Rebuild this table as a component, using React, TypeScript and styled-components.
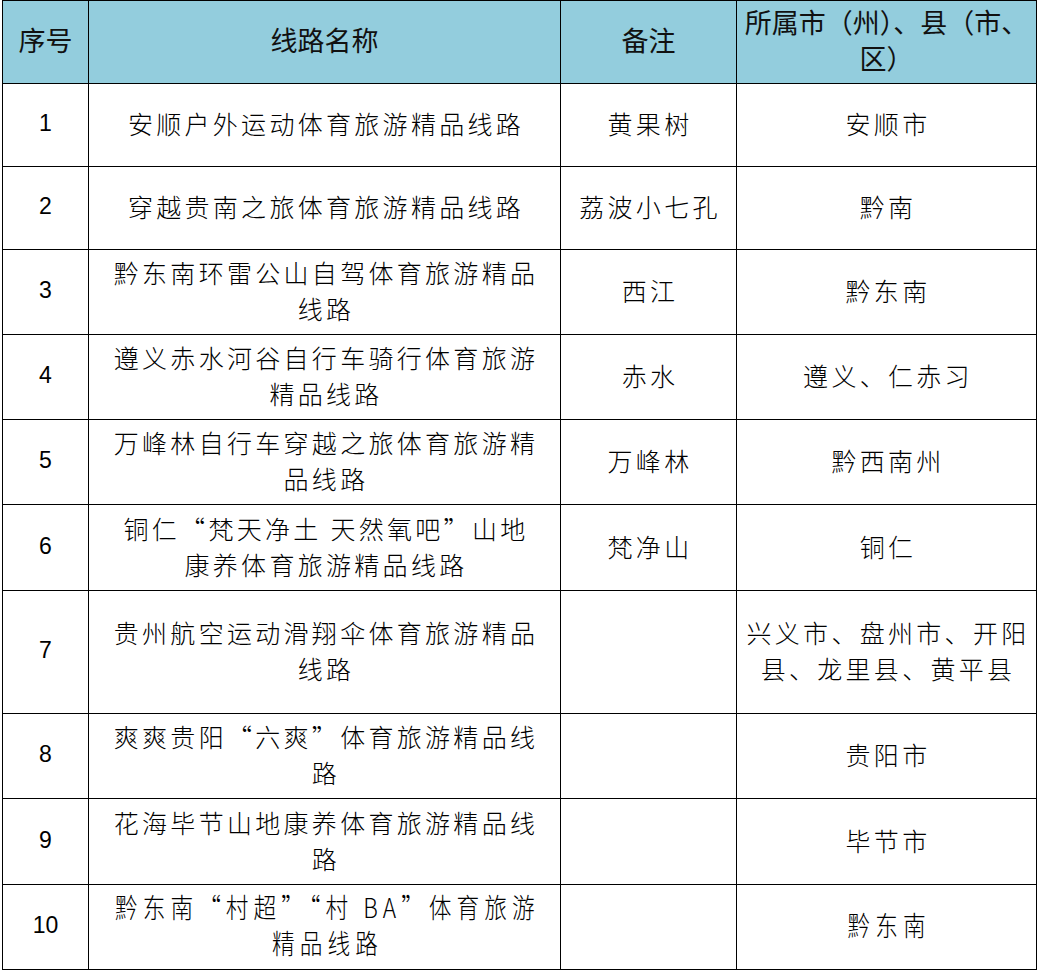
import React from "react";
import styled, { createGlobalStyle } from "styled-components";

const Global = createGlobalStyle`
  html, body { margin: 0; padding: 0; background: #fff; }
  body { font-family: "Noto Sans CJK SC", "Noto Sans", sans-serif; color: #000; }
`;

const Page = styled.div`
  padding: 0 0 0 2px;
  width: 1039px;
  height: 973px;
  box-sizing: border-box;
`;

const Table = styled.div`
  width: 1035px;
  box-sizing: border-box;
  border-left: 1px solid #000;
  border-top: 1px solid #000;
`;

const Row = styled.div<{ $h: number; $head?: boolean }>`
  display: grid;
  grid-template-columns: 86px 472px 176px 300px;
  height: ${(p) => p.$h}px;
  background: ${(p) => (p.$head ? "#93cddd" : "#fff")};
`;

const Cell = styled.div`
  box-sizing: border-box;
  border-right: 1px solid #000;
  border-bottom: 1px solid #000;
  padding-bottom: 4px;
  display: flex;
  flex-direction: column;
  align-items: center;
  justify-content: center;
  text-align: center;
  overflow: hidden;
`;

const HeadText = styled.span`
  font-family: "Noto Sans CJK SC", sans-serif;
  font-size: 27px;
  font-weight: 400;
  line-height: 36px;
  white-space: nowrap;
  color: #111;
`;

const Num = styled.span`
  font-family: "Liberation Sans", Arial, sans-serif;
  font-size: 23px;
  line-height: 36px;
`;

const Line = styled.span<{ $condensed?: boolean }>`
  display: block;
  font-family: "Noto Sans CJK SC", sans-serif;
  font-weight: 300;
  font-size: ${(p) => (p.$condensed ? "27px" : "25px")};
  line-height: 36px;
  letter-spacing: ${(p) => (p.$condensed ? "6px" : "3.3px")};
  padding-left: ${(p) => (p.$condensed ? "6px" : "3px")};
  white-space: nowrap;
  transform: ${(p) => (p.$condensed ? "scaleX(0.84)" : "none")};
`;

type Item = {
  n: string;
  name: string[];
  note: string[];
  area: string[];
  h: number;
  condensed?: boolean;
};

const rows: Item[] = [
  { n: "1", name: ["安顺户外运动体育旅游精品线路"], note: ["黄果树"], area: ["安顺市"], h: 83 },
  { n: "2", name: ["穿越贵南之旅体育旅游精品线路"], note: ["荔波小七孔"], area: ["黔南"], h: 83 },
  { n: "3", name: ["黔东南环雷公山自驾体育旅游精品", "线路"], note: ["西江"], area: ["黔东南"], h: 85 },
  { n: "4", name: ["遵义赤水河谷自行车骑行体育旅游", "精品线路"], note: ["赤水"], area: ["遵义、仁赤习"], h: 85 },
  { n: "5", name: ["万峰林自行车穿越之旅体育旅游精", "品线路"], note: ["万峰林"], area: ["黔西南州"], h: 85 },
  { n: "6", name: ["铜仁“梵天净土 天然氧吧”山地", "康养体育旅游精品线路"], note: ["梵净山"], area: ["铜仁"], h: 86 },
  { n: "7", name: ["贵州航空运动滑翔伞体育旅游精品", "线路"], note: [], area: ["兴义市、盘州市、开阳", "县、龙里县、黄平县"], h: 123 },
  { n: "8", name: ["爽爽贵阳“六爽”体育旅游精品线", "路"], note: [], area: ["贵阳市"], h: 85 },
  { n: "9", name: ["花海毕节山地康养体育旅游精品线", "路"], note: [], area: ["毕节市"], h: 86 },
  { n: "10", name: ["黔东南“村超”“村 BA”体育旅游", "精品线路"], note: [], area: ["黔东南"], h: 85, condensed: true },
];

const Lines: React.FC<{ lines: string[]; condensed?: boolean }> = ({ lines, condensed }) => (
  <>
    {lines.map((l, i) => (
      <Line key={i} $condensed={condensed}>
        {l}
      </Line>
    ))}
  </>
);

export default function App() {
  return (
    <Page>
      <Global />
      <Table>
        <Row $h={83} $head>
          <Cell>
            <HeadText>序号</HeadText>
          </Cell>
          <Cell>
            <HeadText>线路名称</HeadText>
          </Cell>
          <Cell>
            <HeadText>备注</HeadText>
          </Cell>
          <Cell>
            <HeadText>所属市（州）、县（市、</HeadText>
            <HeadText>区）</HeadText>
          </Cell>
        </Row>
        {rows.map((r) => (
          <Row key={r.n} $h={r.h}>
            <Cell>
              <Num>{r.n}</Num>
            </Cell>
            <Cell>
              <Lines lines={r.name} condensed={r.condensed} />
            </Cell>
            <Cell>
              <Lines lines={r.note} />
            </Cell>
            <Cell>
              <Lines lines={r.area} condensed={r.condensed} />
            </Cell>
          </Row>
        ))}
      </Table>
    </Page>
  );
}
